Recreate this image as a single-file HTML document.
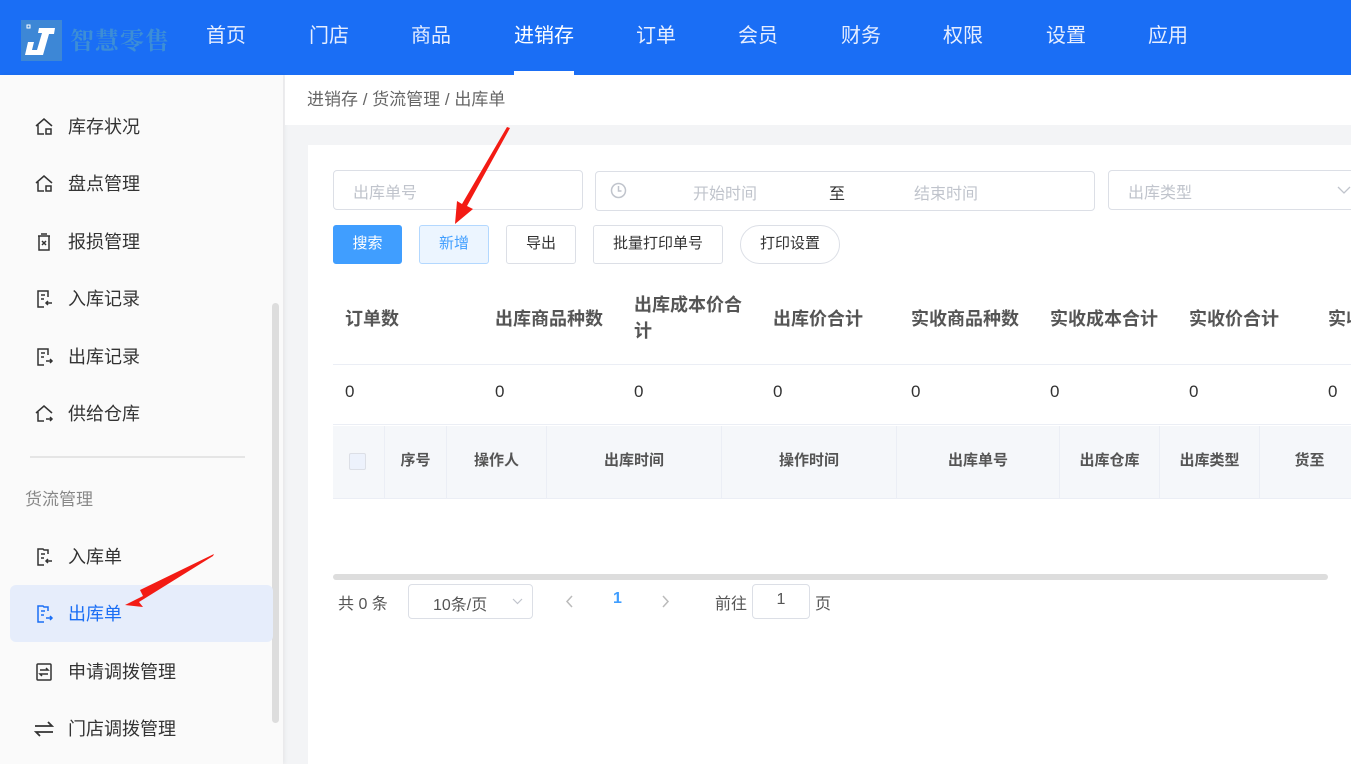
<!DOCTYPE html>
<html><head><meta charset="utf-8"><style>
*{box-sizing:border-box;margin:0;padding:0}
body{width:1351px;height:764px;overflow:hidden;font-family:"Liberation Sans","Noto Sans CJK SC",sans-serif;background:#f3f4f6;position:relative;color:#333}
.hd{position:absolute;left:0;top:0;width:1351px;height:75px;background:#1a6ef5}
.nav{position:absolute;top:19px;font-size:20px;color:#e6eeff}
.nav.a{color:#fff}
.ul{position:absolute;left:514px;top:71px;width:60px;height:4px;background:#fff}
.logo{position:absolute;left:21px;top:20px;width:41px;height:41px;background:#3d87d6}
.lt{position:absolute;left:70px;top:21px;font-size:24px;font-weight:bold;color:#3d8ed6;letter-spacing:1px;font-family:"Noto Serif CJK SC",serif}
.sb{position:absolute;left:0;top:75px;width:283px;height:689px;background:#fafafa;box-shadow:2px 0 4px rgba(0,0,0,.05)}
.it{position:absolute;left:0;width:283px;font-size:18px;color:#333;white-space:nowrap}
.it span{position:absolute;left:68px}
.it svg{position:absolute;left:34px;top:4px}
.bc{position:absolute;left:285px;top:75px;width:1066px;height:50px;background:#fff;font-size:17px;color:#666;padding:10px 0 0 22px}
.card{position:absolute;left:308px;top:145px;width:1043px;height:619px;background:#fff}
.inp{position:absolute;border:1px solid #dcdfe6;border-radius:4px;height:40px;font-size:16px;color:#c0c4cc}
.btn{position:absolute;top:225px;height:39px;border:1px solid #dcdfe6;border-radius:3px;font-size:15px;color:#333;text-align:center;line-height:36px;background:#fff}
.h{position:absolute;top:306px;font-size:18px;font-weight:bold;color:#555;line-height:26px;white-space:nowrap}
.v{position:absolute;top:382px;font-size:17px;color:#333}
.th{position:absolute;top:426px;height:72px;background:#f5f7fa;border-left:1px solid #ebeef5;font-size:15px;font-weight:bold;color:#555;text-align:center;line-height:70px}
</style></head><body>
<div class="hd"></div>
<div class="logo"><svg width="41" height="41" viewBox="0 0 41 41"><rect x="6" y="5" width="3" height="3" fill="none" stroke="#fff" stroke-width="1"/><path d="M4 35l3-13h6l-2 8h5l5-17h-4l1-5h16l-1 6h-5l-6 21H4z" fill="#fff"/></svg></div>
<div class="lt">智慧零售</div>
<div class="nav" style="left:206px">首页</div>
<div class="nav" style="left:309px">门店</div>
<div class="nav" style="left:411px">商品</div>
<div class="nav a" style="left:514px">进销存</div>
<div class="nav" style="left:636px">订单</div>
<div class="nav" style="left:738px">会员</div>
<div class="nav" style="left:841px">财务</div>
<div class="nav" style="left:943px">权限</div>
<div class="nav" style="left:1046px">设置</div>
<div class="nav" style="left:1148px">应用</div>
<div class="ul"></div>

<div class="sb">
<div style="position:absolute;left:272px;top:228px;width:7px;height:420px;background:#ddd;border-radius:4px"></div>
<div style="position:absolute;left:30px;top:381px;width:215px;height:2px;background:#e5e5e5"></div>
<div style="position:absolute;left:10px;top:510px;width:263px;height:57px;background:#e6edfb;border-radius:6px"></div>
</div>
<div class="it" style="top:113px"><svg width="20" height="20" viewBox="0 0 20 20" fill="none" stroke="#333" stroke-width="1.5"><path d="M2 9L10 2l8 7M4 8v9h6"/><rect x="12" y="12" width="5" height="5"/></svg><span>库存状况</span></div>
<div class="it" style="top:170px"><svg width="20" height="20" viewBox="0 0 20 20" fill="none" stroke="#333" stroke-width="1.5"><path d="M2 9L10 2l8 7M4 8v9h6"/><rect x="12" y="12" width="5" height="5"/></svg><span>盘点管理</span></div>
<div class="it" style="top:228px"><svg width="20" height="20" viewBox="0 0 20 20" fill="none" stroke="#333" stroke-width="1.5"><path d="M4 4h12M7 2h6M5 4v14h10V4M8 9l4 4M12 9l-4 4"/></svg><span>报损管理</span></div>
<div class="it" style="top:285px"><svg width="20" height="20" viewBox="0 0 20 20" fill="none" stroke="#333" stroke-width="1.5"><path d="M14 8V2H4v16h6M7 6h4M7 10h3M18 14h-6M14 12l-2 2 2 2"/></svg><span>入库记录</span></div>
<div class="it" style="top:343px"><svg width="20" height="20" viewBox="0 0 20 20" fill="none" stroke="#333" stroke-width="1.5"><path d="M14 8V2H4v16h6M7 6h4M7 10h3M12 14h6M16 12l2 2-2 2"/></svg><span>出库记录</span></div>
<div class="it" style="top:400px"><svg width="20" height="20" viewBox="0 0 20 20" fill="none" stroke="#333" stroke-width="1.5"><path d="M2 9L10 2l8 7M4 8v9h6M12 15h6M16 13l2 2-2 2"/></svg><span>供给仓库</span></div>
<div style="position:absolute;left:25px;top:485px;font-size:17px;color:#888">货流管理</div>
<div class="it" style="top:543px"><svg width="20" height="20" viewBox="0 0 20 20" fill="none" stroke="#333" stroke-width="1.5"><path d="M14 7V3H10L9 2H4v16h6M7 7h4M7 11h3M18 14h-6M14 12l-2 2 2 2"/></svg><span>入库单</span></div>
<div class="it" style="top:600px;color:#1a6ef5"><svg width="20" height="20" viewBox="0 0 20 20" fill="none" stroke="#1a6ef5" stroke-width="1.5"><path d="M14 7V3H10L9 2H4v16h6M7 7h4M7 11h3M12 14h6M16 12l2 2-2 2"/></svg><span>出库单</span></div>
<div class="it" style="top:658px"><svg width="20" height="20" viewBox="0 0 20 20" fill="none" stroke="#333" stroke-width="1.5"><rect x="3" y="2" width="14" height="16" rx="1"/><path d="M6 8h8l-2-2M14 12H6l2 2"/></svg><span>申请调拨管理</span></div>
<div class="it" style="top:715px"><svg width="20" height="20" viewBox="0 0 20 20" fill="none" stroke="#333" stroke-width="1.8"><path d="M1 7h17l-4-4M19 13H2l4 4"/></svg><span>门店调拨管理</span></div>

<div class="bc">进销存 / 货流管理 / 出库单</div>
<div class="card"></div>
<div class="inp" style="left:333px;top:170px;width:250px;padding:8px 0 0 19px">出库单号</div>
<div class="inp" style="left:595px;top:171px;width:500px">
<svg style="position:absolute;left:14px;top:10px" width="17" height="17" viewBox="0 0 17 17" fill="none" stroke="#c0c4cc" stroke-width="1.5"><circle cx="8.5" cy="8.5" r="7"/><path d="M8.5 4v5h3"/></svg>
<span style="position:absolute;left:97px;top:8px">开始时间</span><span style="position:absolute;left:233px;top:8px;color:#333">至</span><span style="position:absolute;left:318px;top:8px">结束时间</span></div>
<div class="inp" style="left:1108px;top:170px;width:260px;padding:8px 0 0 19px">出库类型<svg style="position:absolute;left:228px;top:15px" width="14" height="9" viewBox="0 0 14 9" fill="none" stroke="#c0c4cc" stroke-width="1.3"><path d="M1 1l6 6 6-6"/></svg></div>
<div class="btn" style="left:333px;width:69px;background:#409eff;border-color:#409eff;color:#fff">搜索</div>
<div class="btn" style="left:419px;width:70px;background:#ecf5ff;border-color:#b3d8ff;color:#409eff">新增</div>
<div class="btn" style="left:506px;width:70px">导出</div>
<div class="btn" style="left:593px;width:130px">批量打印单号</div>
<div class="btn" style="left:740px;width:100px;border-radius:20px">打印设置</div>

<div class="h" style="left:345px">订单数</div>
<div class="h" style="left:495px">出库商品种数</div>
<div class="h" style="left:634px;top:292px;width:110px;white-space:normal">出库成本价合计</div>
<div class="h" style="left:773px">出库价合计</div>
<div class="h" style="left:911px">实收商品种数</div>
<div class="h" style="left:1050px">实收成本合计</div>
<div class="h" style="left:1189px">实收价合计</div>
<div class="h" style="left:1328px">实收</div>
<div style="position:absolute;left:333px;top:364px;width:1018px;height:1px;background:#ebeef5"></div>
<div class="v" style="left:345px">0</div><div class="v" style="left:495px">0</div><div class="v" style="left:634px">0</div><div class="v" style="left:773px">0</div><div class="v" style="left:911px">0</div><div class="v" style="left:1050px">0</div><div class="v" style="left:1189px">0</div><div class="v" style="left:1328px">0</div>
<div style="position:absolute;left:333px;top:424px;width:1018px;height:1px;background:#ebeef5"></div>
<div class="th" style="left:333px;width:51px;border-left:none"><div style="position:absolute;left:16px;top:27px;width:17px;height:17px;border:1px solid #dcdfe6;border-radius:2px;background:#edf2fc"></div></div>
<div class="th" style="left:384px;width:62px">序号</div>
<div class="th" style="left:446px;width:100px">操作人</div>
<div class="th" style="left:546px;width:175px">出库时间</div>
<div class="th" style="left:721px;width:175px">操作时间</div>
<div class="th" style="left:896px;width:163px">出库单号</div>
<div class="th" style="left:1059px;width:100px">出库仓库</div>
<div class="th" style="left:1159px;width:100px">出库类型</div>
<div class="th" style="left:1259px;width:100px">货至</div>
<div style="position:absolute;left:333px;top:498px;width:1018px;height:1px;background:#ebeef5"></div>
<div style="position:absolute;left:333px;top:574px;width:995px;height:6px;background:#ddd;border-radius:3px"></div>
<div style="position:absolute;left:338px;top:590px;font-size:16px;color:#555">共 0 条</div>
<div class="inp" style="left:408px;top:584px;width:125px;height:35px;color:#555;padding:6px 0 0 24px">10条/页<svg style="position:absolute;left:103px;top:13px" width="11" height="7" viewBox="0 0 11 7" fill="none" stroke="#c0c4cc" stroke-width="1.2"><path d="M1 1l4.5 4.5L10 1"/></svg></div>
<svg style="position:absolute;left:565px;top:595px" width="8" height="13" viewBox="0 0 8 13" fill="none" stroke="#bbb" stroke-width="1.5"><path d="M7 1L2 6.5 7 12"/></svg>
<div style="position:absolute;left:613px;top:590px;font-size:16px;color:#409eff;font-weight:bold">1</div>
<svg style="position:absolute;left:662px;top:595px" width="8" height="13" viewBox="0 0 8 13" fill="none" stroke="#bbb" stroke-width="1.5"><path d="M1 1l5 5.5L1 12"/></svg>
<div style="position:absolute;left:715px;top:590px;font-size:16px;color:#555">前往</div>
<div class="inp" style="left:752px;top:584px;width:58px;height:35px;color:#555;text-align:center;padding-top:6px">1</div>
<div style="position:absolute;left:815px;top:590px;font-size:16px;color:#555">页</div>

<svg style="position:absolute;left:0;top:0" width="1351" height="764"><polygon points="510,128 467,206 473,209 455,224 457,201 462,204 507,127" fill="#f31b14"/><polygon points="214,554 140,590 143,596 125,605 143,607 139,602 213,556" fill="#f31b14"/></svg>
</body></html>
